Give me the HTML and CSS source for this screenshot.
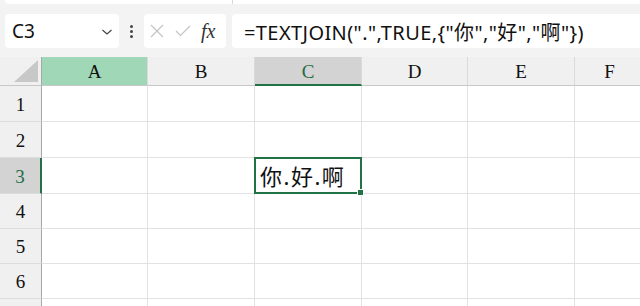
FILE: index.html
```html
<!DOCTYPE html>
<html>
<head>
<meta charset="utf-8">
<link rel="stylesheet" href="styles.css">
</head>
<body>
<div class="top"><div class="top-strip"><div class="top-div"></div></div></div>
<div class="toolbar">
  <div class="namebox"><span class="ref">C3</span>
    <svg class="chev" width="12" height="8" viewBox="0 0 12 8"><path d="M1.5 2 L6 6 L10.5 2" fill="none" stroke="#444" stroke-width="1.2"/></svg>
  </div>
  <div class="dots"><i></i><i></i><i></i></div>
  <div class="fnbox">
    <svg width="14" height="14" viewBox="0 0 14 14"><path d="M1 1 L13 13 M13 1 L1 13" stroke="#c4c4c4" stroke-width="1.2"/></svg>
    <svg width="16" height="12" viewBox="0 0 16 12"><path d="M1 6 L5.5 10.5 L15 1" fill="none" stroke="#c4c4c4" stroke-width="1.2"/></svg>
    <span class="fx">fx</span>
  </div>
  <div class="formula">=TEXTJOIN(".",TRUE,{"你","好","啊"})</div>
</div>
<div class="sheet">
  <div class="corner"><svg width="24" height="22" viewBox="0 0 24 22"><path d="M24 0 L24 22 L0 22 Z" fill="#c8c8c8"/></svg></div>
  <div class="ch sel-a">A</div><div class="ch">B</div><div class="ch sel-c">C</div><div class="ch">D</div><div class="ch">E</div><div class="ch">F</div>

  <div class="rh">1</div><div class="c"></div><div class="c"></div><div class="c"></div><div class="c"></div><div class="c"></div><div class="c"></div>
  <div class="rh">2</div><div class="c"></div><div class="c"></div><div class="c"></div><div class="c"></div><div class="c"></div><div class="c"></div>
  <div class="rh sel-r">3</div><div class="c"></div><div class="c"></div><div class="c active"><span class="val">你.好.啊</span><span class="handle"></span></div><div class="c"></div><div class="c"></div><div class="c"></div>
  <div class="rh">4</div><div class="c"></div><div class="c"></div><div class="c"></div><div class="c"></div><div class="c"></div><div class="c"></div>
  <div class="rh">5</div><div class="c"></div><div class="c"></div><div class="c"></div><div class="c"></div><div class="c"></div><div class="c"></div>
  <div class="rh">6</div><div class="c"></div><div class="c"></div><div class="c"></div><div class="c"></div><div class="c"></div><div class="c"></div>
  <div class="rh"></div><div class="c"></div><div class="c"></div><div class="c"></div><div class="c"></div><div class="c"></div><div class="c"></div>
</div>
</body>
</html>
```
FILE: styles.css
```css
* { box-sizing: border-box; }
html, body { margin: 0; padding: 0; }
body {
  width: 640px; height: 306px; overflow: hidden;
  background: #f3f3f3;
  font-family: "Liberation Sans", "Noto Sans CJK SC", sans-serif;
}
.top { height: 14px; padding-left: 5px; }
.top-strip {
  height: 4px; background: #fff; border-bottom-left-radius: 5px;
  position: relative;
}
.top-div { position: absolute; left: 227px; top: 0; width: 1px; height: 4px; background: #d8d8d8; }
.toolbar {
  display: flex; align-items: center; height: 34px; padding-left: 5px;
}
.namebox {
  width: 114px; height: 34px; background: #fff; border-radius: 4px;
  display: flex; align-items: center; justify-content: space-between;
  padding: 0 6px 0 7px;
}
.ref { font-family: "Noto Sans", sans-serif; font-size: 19px; color: #111; }
.chev { margin-top: 1px; }
.dots {
  width: 25px; display: flex; flex-direction: column; align-items: center; gap: 2px;
}
.dots i { width: 3px; height: 3px; background: #444; border-radius: 50%; display: block; }
.fnbox {
  width: 82px; height: 34px; background: #fff; border-radius: 4px;
  display: flex; align-items: center; padding-left: 6px; gap: 11px;
}
.fx {
  font-family: "Liberation Serif", serif; font-style: italic; font-size: 20px; color: #333;
  margin-left: -1px;
}
.formula {
  flex: 1; margin-left: 6px; height: 34px; background: #fff;
  border-radius: 4px 0 0 4px;
  display: flex; align-items: center; padding-left: 12px;
  font-family: "Noto Sans", "Noto Sans CJK SC", sans-serif;
  font-size: 20px; letter-spacing: 0.4px; color: #111; white-space: nowrap;
}
.sheet {
  margin-top: 9px;
  display: grid;
  grid-template-columns: 42px 106px 107px 107px 106px 107px 70px;
  grid-template-rows: 29px 36px 36px 36px 35px 35px 35px 20px;
  background: #fff;
}
.corner {
  background: #f0f0f0; border-right: 1px solid #a8a8a8; border-bottom: 1px solid #c8c8c8;
  display: flex; align-items: flex-end; justify-content: flex-end; padding: 0 3px 3px 0;
}
.ch {
  background: #f0f0f0; border-right: 1px solid #dadada; border-bottom: 1px solid #c8c8c8;
  display: flex; align-items: center; justify-content: center;
  font-family: "Liberation Serif", serif; font-size: 19px; color: #111; padding-top: 2px;
}
.ch.sel-a { background: #a0d8b7; }
.ch.sel-c { background: #d3d3d3; border-bottom: 2px solid #217346; color: #1e6b44; }
.rh {
  background: #f0f0f0; border-right: 1px solid #a8a8a8; border-bottom: 1px solid #dcdcdc;
  display: flex; align-items: center; justify-content: center;
  font-family: "Liberation Serif", serif; font-size: 19px; color: #111; padding-top: 2px;
}
.rh.sel-r { background: #d3d3d3; border-right: 2px solid #217346; color: #1e6b44; }
.c { border-right: 1px solid #e2e2e2; border-bottom: 1px solid #e2e2e2; background: #fff; }
.c.active { position: relative; }
.c.active::after {
  content: ""; position: absolute; left: -1px; top: -1px; right: -1px; bottom: -1px;
  border: 2px solid #217346;
}
.val {
  position: absolute; left: 5px; top: 1px;
  font-family: "Noto Sans", "Noto Sans CJK SC", sans-serif; font-size: 22px; color: #111;
  letter-spacing: 1.5px;
}
.handle {
  position: absolute; right: -3px; bottom: -3px; width: 5px; height: 5px;
  background: #217346; border: 1px solid #fff; z-index: 2; box-sizing: content-box;
}
```
